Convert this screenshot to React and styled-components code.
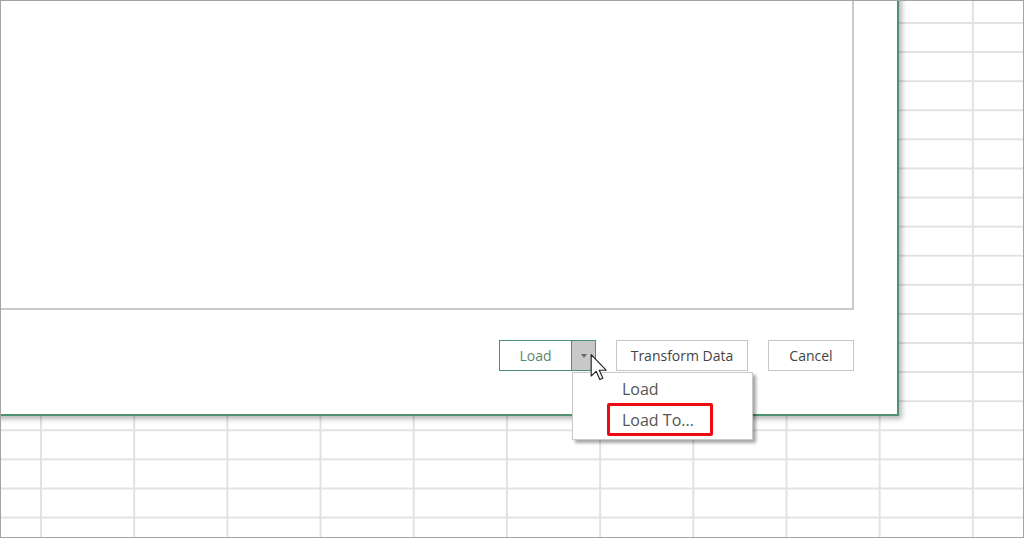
import React from 'react';
import styled, { createGlobalStyle } from 'styled-components';

// STYLES
const Global = createGlobalStyle`
    html, body {
        margin: 0;
        padding: 0;
        background: #ffffff;
    }
`;

const Sheet = styled.div`
    position: relative;
    width: 1024px;
    height: 538px;
    box-sizing: border-box;
    overflow: hidden;
    border: 1px solid #a3a3a3;
    background-color: #ffffff;
    background-image:
        linear-gradient(to right, #e2e2e2 0, #e2e2e2 2px, transparent 2px),
        linear-gradient(to bottom, #e2e2e2 0, #e2e2e2 2px, transparent 2px);
    background-size: 93.2px 100%, 100% 29.1px;
    background-position: 39px 0, 0 21px;
    font-family: 'Open Sans', 'Noto Sans', sans-serif;
`;

const Dialog = styled.div`
    position: absolute;
    left: -21px;
    top: -11px;
    width: 919px;
    height: 426px;
    box-sizing: border-box;
    border: 2px solid #4e9070;
    background: #ffffff;
    box-shadow: 3px 3px 5px rgba(0, 0, 0, 0.28);
    display: flex;
    flex-direction: column;
    gap: 30px;
    padding: 0 43px 43px 0;
`;

const Preview = styled.div`
    flex: 1;
    border: 2px solid #c9c9c9;
    border-top: none;
    background: #ffffff;
`;

const Footer = styled.div`
    height: 31px;
    display: flex;
    justify-content: flex-end;
    gap: 20px;
`;

const Button = styled.button`
    width: ${p => p.$w}px;
    height: 31px;
    box-sizing: border-box;
    border: 1px solid #c6c6c6;
    background: #ffffff;
    color: #444444;
    font-family: inherit;
    font-size: 14px;
    padding: 0;
`;

const Split = styled.div`
    position: relative;
    display: flex;
    width: 97px;
    height: 31px;
    box-sizing: border-box;
    border: 1px solid #4e9070;
`;

const SplitMain = styled.div`
    flex: 1;
    display: flex;
    align-items: center;
    justify-content: center;
    color: #5e8570;
    font-size: 14px;
`;

const SplitArrow = styled.div`
    width: 23px;
    display: flex;
    align-items: center;
    justify-content: center;
    background: #c8c8c8;
    border-left: 1px solid #4e9070;

    &::after {
        content: '';
        border-left: 3.5px solid transparent;
        border-right: 3.5px solid transparent;
        border-top: 4px solid #6a6a6a;
    }
`;

const Menu = styled.div`
    position: absolute;
    left: 72px;
    top: 31px;
    width: 181px;
    box-sizing: border-box;
    border: 1px solid #c9c9c9;
    background: #ffffff;
    box-shadow: 3px 3px 3px rgba(0, 0, 0, 0.35);
    padding: 1px 0 3px 34px;
    display: flex;
    flex-direction: column;
    z-index: 2;
`;

const MenuItem = styled.div`
    display: flex;
    align-items: center;
    height: ${p => (p.$marked ? 33 : 29)}px;
    box-sizing: border-box;
    padding: 0 16px 0 12px;
    align-self: flex-start;
    font-size: 16px;
    color: #555555;
    border: 3px solid ${p => (p.$marked ? '#ee0a10' : 'transparent')};
    border-radius: 2px;
`;

const Cursor = styled.svg`
    position: absolute;
    left: 90px;
    top: 13px;
    z-index: 3;
`;

function App() {
    return (
        <>
            <Global />
            <Sheet>
                <Dialog>
                    <Preview />
                    <Footer>
                        <Split>
                            <SplitMain>Load</SplitMain>
                            <SplitArrow />
                            <Menu>
                                <MenuItem>Load</MenuItem>
                                <MenuItem $marked>Load To...</MenuItem>
                            </Menu>
                            <Cursor width="18" height="27" viewBox="0 0 12 19">
                                <path
                                    d="M0.5 0.5 L0.5 15.5 L4 12.2 L6.6 18 L8.7 17.1 L6.2 11.4 L11 11.4 Z"
                                    fill="#ffffff"
                                    stroke="#222222"
                                    strokeWidth="0.8"
                                    strokeLinejoin="round"
                                />
                            </Cursor>
                        </Split>
                        <Button $w={132}>Transform Data</Button>
                        <Button $w={86}>Cancel</Button>
                    </Footer>
                </Dialog>
            </Sheet>
        </>
    );
}

export default App;
